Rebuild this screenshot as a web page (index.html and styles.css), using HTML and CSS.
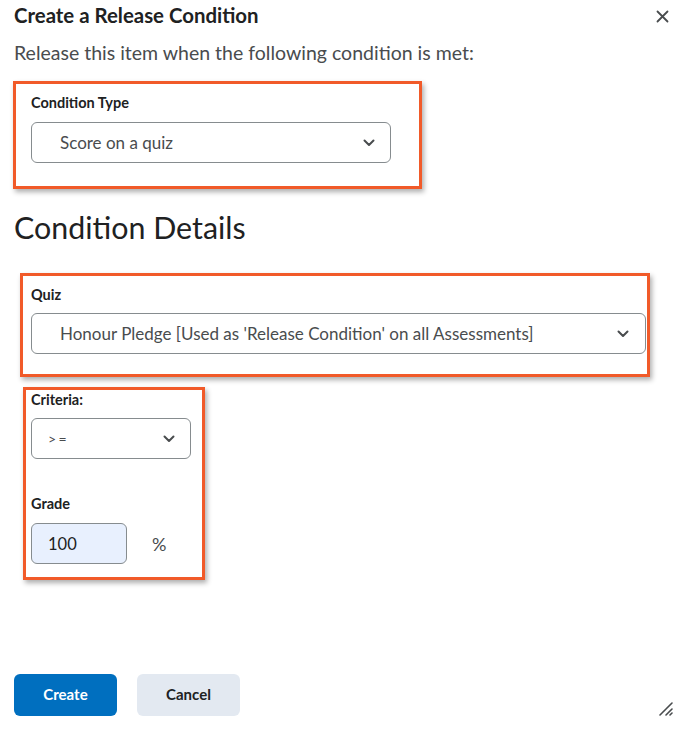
FILE: index.html
```html
<!DOCTYPE html>
<html lang="en">
<head>
<meta charset="utf-8">
<title>Create a Release Condition</title>
<link rel="stylesheet" href="styles.css">
</head>
<body>
<div class="dialog">
  <div class="header">
    <h1 class="title">Create a Release Condition</h1>
    <svg class="close" width="13" height="13" viewBox="0 0 13 13" aria-label="Close"><path d="M1.5 1.5 L11.5 11.5 M11.5 1.5 L1.5 11.5" stroke="#494c4e" stroke-width="1.8" stroke-linecap="round" fill="none"/></svg>
  </div>
  <p class="intro">Release this item when the following condition is met:</p>

  <div class="mark mark-type">
    <div class="label">Condition Type</div>
    <div class="select select-type">
      <span class="select-text">Score on a quiz</span>
      <svg class="chev" width="12" height="8" viewBox="0 0 12 8"><path d="M1.5 1.5 L6 6 L10.5 1.5" stroke="#494c4e" stroke-width="2" stroke-linecap="round" stroke-linejoin="round" fill="none"/></svg>
    </div>
  </div>

  <h2 class="section">Condition Details</h2>

  <div class="mark mark-quiz">
    <div class="label">Quiz</div>
    <div class="select select-quiz">
      <span class="select-text">Honour Pledge [Used as 'Release Condition' on all Assessments]</span>
      <svg class="chev" width="12" height="8" viewBox="0 0 12 8"><path d="M1.5 1.5 L6 6 L10.5 1.5" stroke="#494c4e" stroke-width="2" stroke-linecap="round" stroke-linejoin="round" fill="none"/></svg>
    </div>
  </div>

  <div class="mark mark-criteria">
    <div class="label">Criteria:</div>
    <div class="select select-criteria">
      <span class="select-text small">&gt;=</span>
      <svg class="chev" width="12" height="8" viewBox="0 0 12 8"><path d="M1.5 1.5 L6 6 L10.5 1.5" stroke="#494c4e" stroke-width="2" stroke-linecap="round" stroke-linejoin="round" fill="none"/></svg>
    </div>
    <div class="label label-grade">Grade</div>
    <div class="grade-row">
      <div class="input">100</div>
      <span class="pct">%</span>
    </div>
  </div>

  <div class="footer">
    <button class="btn btn-primary">Create</button>
    <button class="btn btn-secondary">Cancel</button>
    <svg class="grip" width="15" height="15" viewBox="0 0 15 15"><path d="M2 14 L14 2 M8 14 L14 8 M12 14 L14 12" stroke="#494c4e" stroke-width="1.6" stroke-linecap="round" fill="none"/></svg>
  </div>
</div>
</body>
</html>
```

FILE: styles.css
```css
* { box-sizing: border-box; }
html, body { margin: 0; padding: 0; background: #ffffff; }
body {
  font-family: Lato, "Noto Sans", sans-serif;
  color: #202122;
}
.dialog {
  padding: 0 14px;
  width: 686px;
  height: 733px;
}
.header {
  display: flex;
  justify-content: space-between;
  align-items: flex-start;
}
.title {
  margin: 3px 0 0 0;
  font-size: 20.4px;
  line-height: 24px;
  font-weight: 700;
  color: #202122;
}
.close {
  margin-top: 10px;
  margin-right: 3px;
}
.intro {
  margin: 14px 0 0 0;
  font-size: 19.5px;
  line-height: 24px;
  color: #494c4e;
}
.mark {
  border: 3px solid #f15a29;
  box-shadow: 2px 3px 5px rgba(0, 0, 0, 0.32);
  background: #fff;
}
.mark-type {
  margin: 16px 0 0 -1px;
  width: 409px;
  padding: 10px 0 23px 15px;
}
.label {
  font-size: 14.5px;
  line-height: 17px;
  font-weight: 700;
  color: #202122;
}
.select {
  display: flex;
  align-items: center;
  justify-content: space-between;
  height: 41px;
  border: 1px solid #868c8f;
  border-radius: 6px;
  background: #fff;
  padding: 0 15px 0 28px;
  margin-top: 11px;
}
.select-text {
  font-size: 17px;
  color: #494c4e;
}
.select-text.small {
  font-size: 14px;
  letter-spacing: 2.5px;
}
.select-type { width: 360px; }
.section {
  margin: 20px 0 0 0;
  font-size: 30.4px;
  line-height: 36px;
  font-weight: 400;
  color: #202122;
}
.mark-quiz {
  margin: 28px 0 0 6px;
  width: 630px;
  padding: 10px 0 20px 8px;
}
.select-quiz { width: 615px; margin-top: 10px; padding-right: 16px; }
.mark-criteria {
  margin: 10px 0 0 9px;
  width: 182px;
  padding: 1px 0 13px 5px;
}
.select-criteria {
  width: 160px;
  margin-top: 10px;
  padding-left: 16px;
}
.label-grade { margin-top: 36px; }
.grade-row {
  display: flex;
  align-items: center;
  margin-top: 11px;
}
.input {
  width: 96px;
  height: 41px;
  border: 1px solid #868c8f;
  border-radius: 6px;
  background: #e8f0fe;
  font-size: 16.5px;
  color: #202122;
  padding-left: 16px;
  display: flex;
  align-items: center;
}
.pct {
  margin-left: 25px;
  font-size: 18px;
  color: #494c4e;
}
.footer {
  display: flex;
  align-items: flex-end;
  gap: 20px;
  margin-top: 94px;
}
.btn {
  width: 103px;
  height: 42px;
  border: none;
  border-radius: 6px;
  font-family: Lato, "Noto Sans", sans-serif;
  font-size: 15px;
  line-height: 18px;
  font-weight: 700;
  padding: 0 0 3px 0;
}
.btn-primary {
  background: #006fbf;
  color: #fff;
}
.btn-secondary {
  background: #e3e9f1;
  color: #202122;
}
.grip {
  margin-left: auto;
  margin-right: -1px;
  margin-bottom: 0;
}
```
